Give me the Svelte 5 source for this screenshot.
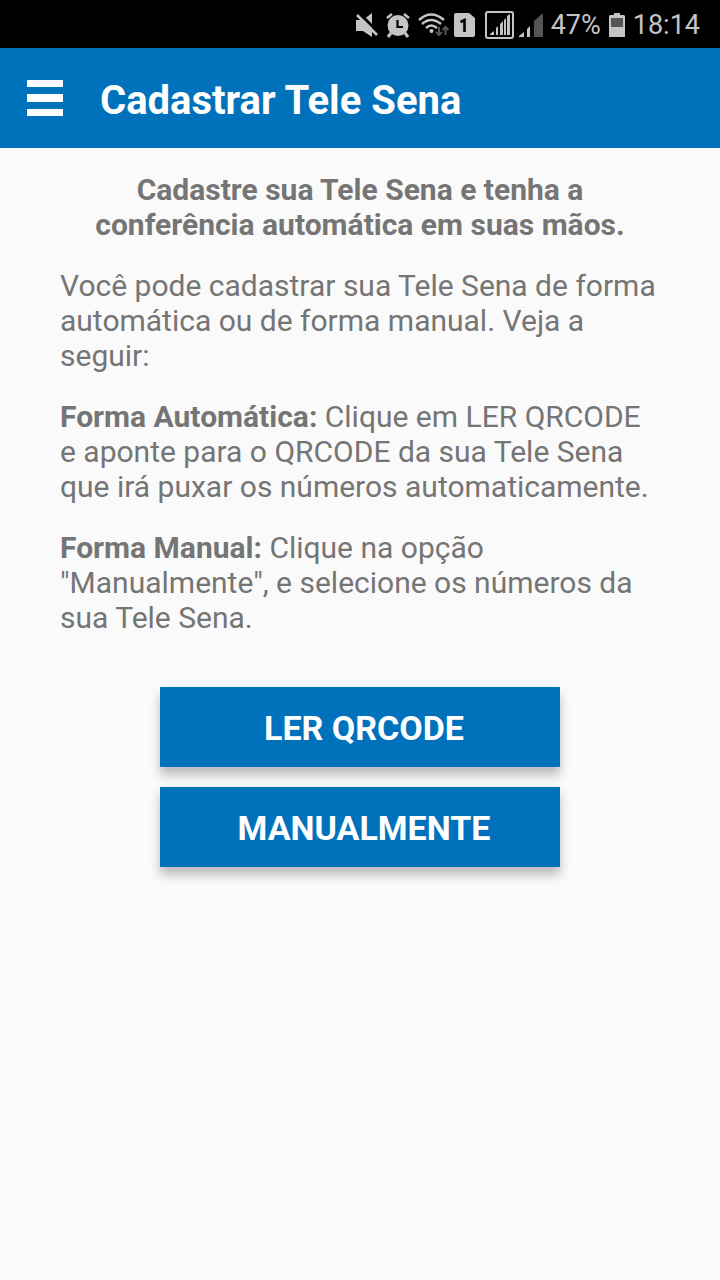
<script lang="ts">
  let { onMenu, onScan, onManual }: { onMenu?: () => void; onScan?: () => void; onManual?: () => void } = $props();
</script>

<div class="status">
  <!-- muted -->
  <svg width="22" height="24" viewBox="0 0 22 24">
    <path d="M0 7h7L16 0v24L7 18H0z" fill="#c4c4c4" />
    <path d="M3 0l19 19" stroke="#000" stroke-width="3" />
    <path d="M1 2l20 20" stroke="#c4c4c4" stroke-width="2.6" />
  </svg>
  <!-- alarm -->
  <svg width="24" height="24" viewBox="0 0 24 24">
    <circle cx="12" cy="12.5" r="10.5" fill="#c4c4c4" />
    <path d="M1 5l5-4M23 5l-5-4" stroke="#c4c4c4" stroke-width="2.6" />
    <path d="M5 20l-3 4M19 20l3 4" stroke="#c4c4c4" stroke-width="3" />
    <path d="M11.500 7v7H17" fill="none" stroke="#000" stroke-width="2.2" />
  </svg>
  <!-- wifi -->
  <svg width="28" height="24" viewBox="0 0 28 24">
    <g fill="none" stroke="#c4c4c4" stroke-width="2.5">
      <path d="M1 7q12-11 25 0" />
      <path d="M4 11q9-8 19 0" />
      <path d="M8 15q5-5 11 0" />
    </g>
    <circle cx="13.500" cy="18" r="2" fill="#c4c4c4" />
    <g fill="none" stroke="#555" stroke-width="2">
      <path d="M21 14v7M18 19l3 3 3-3" />
      <path d="M27.500 22v-7M24.500 17l3-3 3 3" />
    </g>
  </svg>
  <!-- sim 1 -->
  <svg width="23" height="24" viewBox="0 0 23 24">
    <path d="M2 0h13l6 5v17a2 2 0 0 1-2 2H2a2 2 0 0 1-2-2V2a2 2 0 0 1 2-2z" fill="#c4c4c4" />
    <path d="M6.500 9l4-2v12" fill="none" stroke="#000" stroke-width="2.6" />
  </svg>
  <!-- signal of both sims -->
  <svg width="58" height="28" viewBox="0 0 58 28">
    <rect x="1" y="1" width="27" height="26" rx="2" fill="none" stroke="#c4c4c4" stroke-width="2" />
    <path d="M5 24v-1l4-3v4zM11 24v-7l2-2v9zM15 24V13l3-3v14zM19 24V9l2-2v17zM22 24V5l3-2v21z" fill="#c4c4c4" />
    <path d="M34 26v-1l5-4v5zM42 26v-8l3-3v11z" fill="#c4c4c4" />
    <path d="M49 26V10l9-8v24z" fill="#555" />
  </svg>
  <span>47%</span>
  <!-- battery -->
  <svg width="16" height="24" viewBox="0 0 16 24">
    <path d="M5 0h6v2h4l1 1v21H0V3l1-1h4z" fill="#c4c4c4" />
    <rect x="2" y="5" width="12" height="9" fill="#555" />
  </svg>
  <span>18:14</span>
</div>

<header>
  <button class="menu" onclick={onMenu} aria-label="Menu">
    <svg width="36" height="36" viewBox="0 0 36 36" fill="#fff">
      <rect width="36" height="7" />
      <rect y="14" width="36" height="8" />
      <rect y="29" width="36" height="7" />
    </svg>
  </button>
  <h1>Cadastrar Tele Sena</h1>
</header>

<main>
  <h2>Cadastre sua Tele Sena e tenha a conferência automática em suas mãos.</h2>
  <p>Você pode cadastrar sua Tele Sena de forma automática ou de forma manual. Veja a seguir:</p>
  <p><b>Forma Automática:</b> Clique em LER QRCODE e aponte para o QRCODE da sua Tele Sena que irá puxar os números automaticamente.</p>
  <p><b>Forma Manual:</b> Clique na opção "Manualmente", e selecione os números da sua Tele Sena.</p>

  <div class="actions">
    <button onclick={onScan}>LER QRCODE</button>
    <button onclick={onManual}>MANUALMENTE</button>
  </div>
</main>

<style>
  :global(body) {
    background: #fafafa;
    font-family: Roboto, "Liberation Sans", sans-serif;
  }
  .status {
    display: flex; align-items: center; justify-content: flex-end;
    gap: 8px;
    height: 48px;
    padding: 2px 20px 0 0;
    box-sizing: border-box;
    background: #000;
    color: #c4c4c4;
    font-size: 27px;
  }
  .status svg { flex: none; overflow: visible; }
  header {
    display: flex; align-items: center;
    gap: 37px;
    height: 100px;
    padding: 0 27px;
    background: #0072bc;
    color: #fff;
  }
  h1 { margin: 0; padding-top: 6px; font-size: 40px; line-height: 48px; font-weight: 700; }
  button { border: 0; font-family: inherit; color: #fff; cursor: pointer; }
  .menu { padding: 0; background: none; }
  .menu svg { display: block; }
  main {
    padding: 24px 60px;
    color: #757575;
    font-size: 30px;
    line-height: 35px;
  }
  h2 { margin: 0; font-size: 30px; font-weight: 700; text-align: center; }
  p { margin: 26px 0 0; }
  .actions {
    display: flex; flex-direction: column; align-items: center;
    gap: 20px;
    margin-top: 52px;
  }
  .actions button {
    width: 100%; max-width: 400px;
    height: 80px;
    padding: 2px 0 0 8px;
    background: #0072bc;
    box-shadow: 0 8px 10px rgba(0, 0, 0, 0.25);
    font-size: 34px;
    font-weight: 700;
  }
</style>
